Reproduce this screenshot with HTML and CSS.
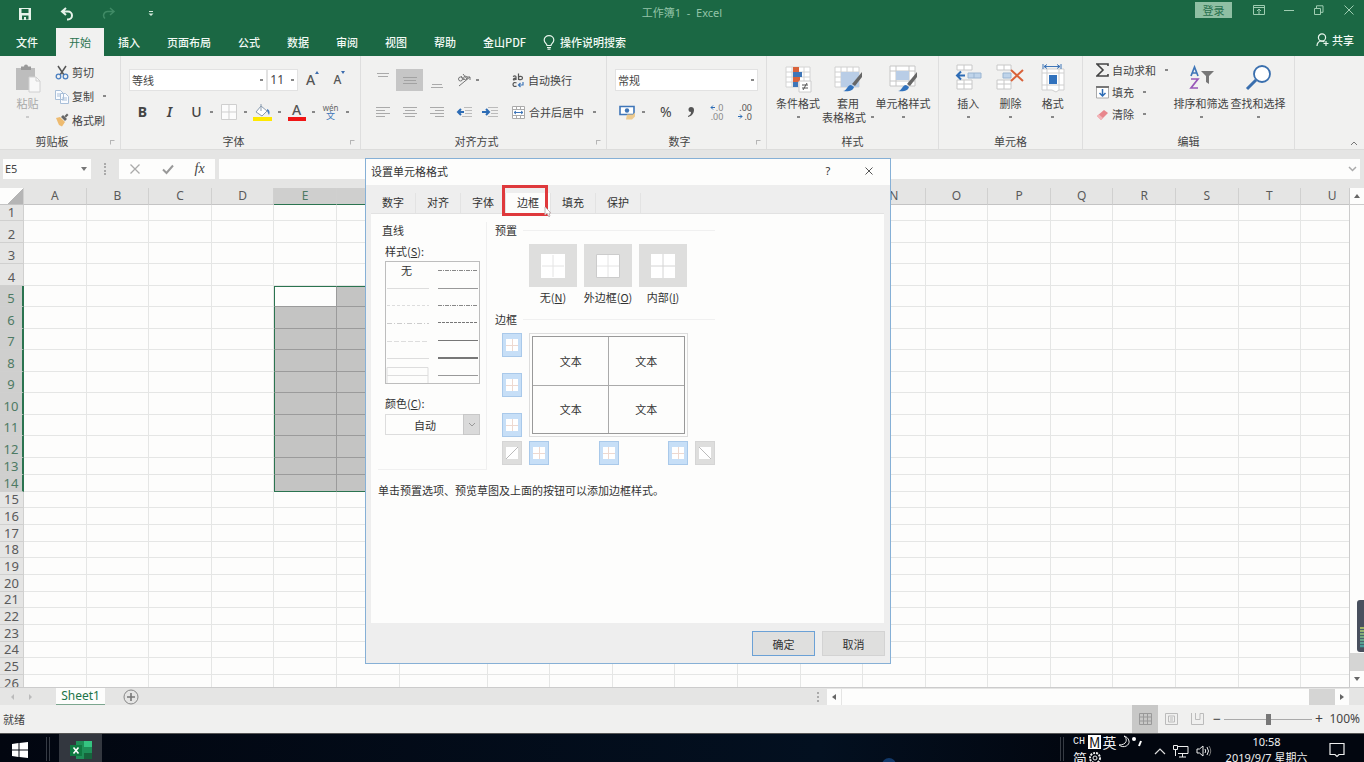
FILE: index.html
```html
<!DOCTYPE html>
<html lang="zh-CN">
<head>
<meta charset="utf-8">
<title>工作簿1 - Excel</title>
<link rel="stylesheet" href="styles.css">
</head>
<body>
<header class="titlebar">
  <div class="quick">
    <button aria-label="保存"><svg width="14" height="14" viewBox="0 0 14 14"><path fill="#e6f3ea" fill-rule="evenodd" d="M1 1h12v12H1zM3.500 2v4h7V2zM4 8.500v4h2v-2.500h2v2.500h2.500v-4z"/></svg></button>
    <button aria-label="撤消"><svg width="14" height="14" viewBox="0 0 14 14"><path d="M6 1 2 4.500 6 8M2.500 4.500H8a4 4 0 0 1 0 8H7" fill="none" stroke="#e6f3ea" stroke-width="2"/></svg></button>
    <button aria-label="恢复"><svg width="14" height="14" viewBox="0 0 14 14"><path d="M8 1l4 3.500L8 8M11.500 4.500H6a4 4 0 0 0-3 7" fill="none" stroke="#3f8a65" stroke-width="1.500"/></svg></button>
    <button aria-label="自定义快速访问工具栏"><svg width="8" height="8" viewBox="0 0 8 8"><path d="M2 1.500h4" stroke="#d5eadd"/><path d="M1.500 3.500h5L4 6z" fill="#d5eadd"/></svg></button>
  </div>
  <h1 class="doc-title">工作簿1&nbsp; -&nbsp; Excel</h1>
  <div class="window-tools">
    <button class="login">登录</button>
    <button aria-label="功能区显示选项"><svg width="12" height="10" viewBox="0 0 12 10" fill="none" stroke="#9fcdb2"><path d="M.5.5h11v9H.5zM.5 2.500h11M6 9V4M4 6l2-2 2 2"/></svg></button>
    <button aria-label="最小化"><svg width="12" height="10" viewBox="0 0 12 10"><path d="M1 5.500h10" stroke="#9fcdb2"/></svg></button>
    <button aria-label="还原"><svg width="12" height="10" viewBox="0 0 12 10" fill="none" stroke="#9fcdb2"><path d="M1.500 3.500h6v6h-6zM3.500 3V.8h6.500v6.500H8"/></svg></button>
    <button aria-label="关闭"><svg width="12" height="10" viewBox="0 0 12 10"><path d="m1.500.5 9 9m0-9-9 9" stroke="#9fcdb2"/></svg></button>
  </div>
</header>
<nav class="tabs">
  <button class="file">文件</button><button class="active">开始</button><button>插入</button><button>页面布局</button><button>公式</button><button>数据</button><button>审阅</button><button>视图</button><button>帮助</button><button>金山PDF</button>
  <button class="tell"><svg width="12" height="15" viewBox="0 0 12 15" fill="none" stroke="#e8f5ec" stroke-width="1.200"><path d="M4 10.500C4 8.500 1.200 8 1.200 5a4.800 4.400 0 0 1 9.600 0c0 3-2.800 3.500-2.800 5.500zM4 12.500h4M4.500 14.200h3"/></svg>操作说明搜索</button>
  <button class="share"><svg width="13" height="14" viewBox="0 0 13 14" fill="none" stroke="#e8f5ec" stroke-width="1.200"><circle cx="6" cy="4.500" r="3.600"/><path d="M1 13c0-3 2-5 4-5s2.500.5 3.500 1M10 8v5M7.500 10.500h5"/></svg>共享</button>
</nav>

<section class="ribbon" aria-label="开始">
  <div class="group g-clip">
    <div class="body">
      <button class="big paste"><svg width="28" height="30" viewBox="0 0 28 30"><path d="M2 4h19v22H2z" fill="#bdbdbd"/><path d="M7 2.500h3a2 2 0 0 1 4 0h3V6H7z" fill="#999"/><path d="M15 13h7l4 4v11H15z" fill="#f8f8f8" stroke="#d0d0d0"/><path d="M22 13v4h4" fill="none" stroke="#d0d0d0"/></svg><span>粘贴</span><i class="caret pale"></i></button>
      <div class="stack">
        <button><svg width="14" height="15" viewBox="0 0 14 15" fill="none"><path d="m3 1 6 9m2-9-6 9" stroke="#555" stroke-width="1.500"/><circle cx="3.500" cy="11.500" r="2.300" stroke="#4a7fc0" stroke-width="1.300"/><circle cx="10.500" cy="11.500" r="2.300" stroke="#4a7fc0" stroke-width="1.300"/></svg>剪切</button>
        <button><svg width="14" height="15" viewBox="0 0 14 15" fill="#fafcff" stroke="#a9bfd8"><path d="M.5 1.500h5l3 3v6h-8zM5.500 4.500h5l3 3v7h-8zM7 9h5M7 11h5M2 5h3M2 7h3"/></svg>复制<i class="caret"></i></button>
        <button><svg width="14" height="14" viewBox="0 0 14 14"><path d="m1 5 4-1 5 5-3 4.500L4 12z" fill="#eebb70"/><path d="m6 4 2-2 4 4-2 2zM9.500 3 12 .5l1.500 1.500L11 4.500z" fill="#666"/></svg>格式刷</button>
      </div>
    </div>
    <footer>剪贴板<i class="launch"></i></footer>
  </div>
  <div class="group g-font">
    <div class="body col">
      <div class="row">
        <label class="combo font-name"><input value="等线" aria-label="字体"><i class="caret"></i></label><label class="combo font-size"><input value="11" aria-label="字号"><i class="caret"></i></label>
        <button class="grow" aria-label="增大字号"><b class="letter big-a">A</b><svg width="4" height="3" viewBox="0 0 4 3"><path d="m0 3 2-3 2 3z" fill="#3c6cae"/></svg></button>
        <button class="grow" aria-label="减小字号"><b class="letter">A</b><svg width="4" height="3" viewBox="0 0 4 3"><path d="m0 0 2 3 2-3z" fill="#3c6cae"/></svg></button>
      </div>
      <div class="row marks">
        <button class="bold">B</button><button class="italic">I</button><button class="under">U</button><i class="caret"></i>
        <button aria-label="边框"><svg width="16" height="16" viewBox="0 0 16 16" fill="#fcfcfc" stroke="#cfcfcf"><path d="M.5.5h15v15H.5zM8 .5v15M.5 8h15"/></svg></button><i class="caret"></i>
        <button aria-label="填充颜色"><svg width="19" height="17" viewBox="0 0 19 17"><path d="m8 2 6 5-5 5-6-4z" fill="#fff" stroke="#8b9cb0"/><path d="M8 7V0" stroke="#8b9cb0"/><path d="M14 5c3 1 3 4 2 6-1-1-1-3-2-4z" fill="#4a7fc0"/><path d="M0 13h19v4H0z" fill="#ffe800"/></svg></button><i class="caret"></i>
        <button aria-label="字体颜色" class="color-a"><b class="letter">A</b></button><i class="caret"></i>
        <button class="phon"><small>wén</small><span>文</span></button><i class="caret"></i>
      </div>
    </div>
    <footer>字体<i class="launch"></i></footer>
  </div>
  <div class="group g-align">
    <div class="body align-grid">
      <button aria-label="顶端对齐"><svg width="12" height="16" viewBox="0 0 12 16" stroke="#aaa"><path d="M0 1.500h12M1 4.500h10"/></svg></button>
      <button class="on" aria-label="垂直居中"><svg width="14" height="16" viewBox="0 0 14 16" stroke="#a2a2a2"><path d="M0 5.500h14M1 8.500h12M0 11.500h14"/></svg></button>
      <button aria-label="底端对齐"><svg width="12" height="16" viewBox="0 0 12 16" stroke="#aaa"><path d="M1 12.500h10M0 15.500h12"/></svg></button>
      <button class="angle" aria-label="方向"><svg width="15" height="14" viewBox="0 0 15 14" fill="none" stroke="#777"><path d="m2 13 11-9m-3 0h3v3"/><circle cx="3.500" cy="6" r="2"/><path d="m4 3 3 4M6 1l4 5"/><circle cx="8.500" cy="5" r="1.800"/></svg><i class="caret"></i></button>
      <button class="wide"><svg width="12" height="15" viewBox="0 0 12 15" fill="none" stroke="#555" stroke-width="1.200"><path d="M1 3.500c2-1 3-.5 3 .5v3M4 5C1 5 1 7 2 7s2-.5 2-1.500M6.500.5V7M6.500 4c1-1 4-1 4 1s-3 2-4 1M4.500 10C3 9 1 9.500 1 11.500s2 2.500 3.500 1.500"/><path d="M11 9v3H6.500m2-2-2 2 2 2" stroke="#3f76b8"/></svg>自动换行</button>
      <button aria-label="左对齐"><svg width="14" height="12" viewBox="0 0 14 12" stroke="#aaa"><path d="M0 1.500h14M0 4.500h9M0 7.500h14M0 10.500h9"/></svg></button>
      <button aria-label="居中"><svg width="14" height="12" viewBox="0 0 14 12" stroke="#aaa"><path d="M0 1.500h14M2 4.500h10M0 7.500h14M2 10.500h10"/></svg></button>
      <button aria-label="右对齐"><svg width="14" height="12" viewBox="0 0 14 12" stroke="#aaa"><path d="M0 1.500h14M5 4.500h9M0 7.500h14M5 10.500h9"/></svg></button>
      <div class="indents"><button aria-label="减少缩进量"><svg width="16" height="12" viewBox="0 0 16 12"><path d="M8 1.500h8M9 4.500h7M9 7.500h7M6 10.500h10" stroke="#bbb"/><path d="M8 6H2m3-3L2 6l3 3" fill="none" stroke="#2d6cb5" stroke-width="2"/></svg></button><button aria-label="增加缩进量"><svg width="16" height="12" viewBox="0 0 16 12"><path d="M6 1.500h10M9 4.500h7M9 7.500h7M6 10.500h10" stroke="#bbb"/><path d="M0 6h6M4 3l3 3-3 3" fill="none" stroke="#2d6cb5" stroke-width="2"/></svg></button></div>
      <button class="wide"><svg width="13" height="13" viewBox="0 0 13 13" fill="#fff" stroke="#aaa"><path d="M.5.5h12v12H.5zM4.500.5v3M8.500.5v3M.5 3.500h12M.5 9.500h12M4.500 9.500v3M8.500 9.500v3"/><path d="M2 6.500h9M4 5 2 6.500 4 8m5-3 2 1.500L9 8" stroke="#3f76b8" fill="none"/></svg>合并后居中<i class="caret"></i></button>
    </div>
    <footer>对齐方式<i class="launch"></i></footer>
  </div>
  <div class="group g-num">
    <div class="body col">
      <div class="row"><label class="combo format"><input value="常规" aria-label="数字格式"><i class="caret"></i></label></div>
      <div class="row spread">
        <button aria-label="会计数字格式"><svg width="17" height="15" viewBox="0 0 17 15"><path d="M1 1.500h14v8H1z" fill="#fff" stroke="#3f76b8" stroke-width="1.600"/><circle cx="8" cy="5.500" r="2.200" fill="#3f76b8"/><path d="M8 9.500h6l2-2v4l-3 3H7z" fill="#edca8e"/></svg><i class="caret"></i></button>
        <button class="pct">%</button>
        <button aria-label="千位分隔样式"><svg width="8" height="12" viewBox="0 0 8 12"><path d="M4 1a2.500 2.500 0 1 0 0 5c0 2-1 3-3 4v1c4-1 6-4 6-7a3 3 0 0 0-3-3z" fill="#555"/></svg></button>
        <button class="dec"><span><svg width="5" height="5" viewBox="0 0 5 5"><path d="M5 2.500H1m2-2-2 2 2 2" stroke="#2d6cb5" fill="none"/></svg>.0</span><span>.00</span></button>
        <button class="dec dark"><span>.00</span><span><svg width="5" height="5" viewBox="0 0 5 5"><path d="M0 2.500h4m-2-2 2 2-2 2" stroke="#2d6cb5" fill="none"/></svg>.0</span></button>
      </div>
    </div>
    <footer>数字<i class="launch"></i></footer>
  </div>
  <div class="group g-style">
    <div class="body">
      <button class="big"><svg width="28" height="30" viewBox="0 0 28 30"><path d="M2 3h24v20H2zM8 3v20M14 3v20M20 3v20M2 8h24M2 13h24M2 18h24" fill="#fff" stroke="#d4d4d4"/><path d="M9 3h6v5H9zM9 13h7v5H9z" fill="#d9623a"/><path d="M9 8h9v5H9zM9 18h5v5H9z" fill="#3f76b8"/><path d="M15 17h12v11H15z" fill="#fff" stroke="#ccc"/><path d="M18 21h6M18 24h6M23 19l-4 7" stroke="#555"/></svg><span>条件格式</span><i class="caret"></i></button>
      <button class="big"><svg width="28" height="30" viewBox="0 0 28 30"><path d="M1 3h24v20H1zM7 3v20M13 3v20M19 3v20M1 8h24M1 13h24M1 18h24" fill="#fff" stroke="#d0d0d0"/><path d="M7 8h18v15H7z" fill="#b9cde6"/><path d="M28 8 18 20l3 2 7-9z" fill="#666"/><path d="M9 27c4 0 4-6 8-6l3 2c-1 4-6 5-11 4z" fill="#3172bd"/></svg><span>套用</span><span class="two">表格格式<i class="caret"></i></span></button>
      <button class="big"><svg width="28" height="30" viewBox="0 0 28 30"><path d="M1 2h25v20H1zM7 2v20M20 2v20M1 7h25M1 17h25" fill="#fff" stroke="#c6c6c6"/><path d="M7 7h13v9H7z" fill="#b9cde6"/><path d="M28 8 18 20l3 2 7-9z" fill="#666"/><path d="M9 27c4 0 4-6 8-6l3 2c-1 4-6 5-11 4z" fill="#3172bd"/></svg><span>单元格样式</span><i class="caret"></i></button>
    </div>
    <footer>样式</footer>
  </div>
  <div class="group g-cells">
    <div class="body">
      <button class="big"><svg width="28" height="30" viewBox="0 0 28 30"><path d="M3 1h15v5H3zM10 1v5M3 16h15v9H3zM10 16v9M3 20h15" fill="#fff" stroke="#c8c8c8"/><path d="M14 9h13v5H14zM20 9v5" fill="#bfd4ea" stroke="#9ab5d2"/><path d="M11 11.500H3m4-4-4 4 4 4" fill="none" stroke="#2d6cb5" stroke-width="2"/></svg><span>插入</span><i class="caret"></i></button>
      <button class="big"><svg width="28" height="30" viewBox="0 0 28 30"><path d="M1 1h14v5H1zM8 1v5M1 16h14v9H1zM8 16v9M1 20h14" fill="#fff" stroke="#c8c8c8"/><path d="M7 9h8v5H7z" fill="#bfd4ea" stroke="#9ab5d2"/><path d="m15 6 12 11m0-11L15 17" stroke="#d9623a" stroke-width="2"/></svg><span>删除</span><i class="caret"></i></button>
      <button class="big"><svg width="28" height="30" viewBox="0 0 28 30"><path d="M3 5h22v21h-5l-3 2-4-2H3zM3 9h22M3 21h22M8 5v21M20 5v21" fill="#fff" stroke="#cfcfcf"/><path d="M10 11h8v9h-8z" fill="#3172bd"/><path d="M4 0v5M22 0v5M5 2.500h16M8 .5l-3 2 3 2m10-4 3 2-3 2" fill="none" stroke="#3f76b8"/></svg><span>格式</span><i class="caret"></i></button>
    </div>
    <footer>单元格</footer>
  </div>
  <div class="group g-edit">
    <div class="body">
      <div class="stack">
        <button><svg width="13" height="14" viewBox="0 0 13 14"><path d="M12 3V1H1l6 6-6 6h11v-2" fill="none" stroke="#444" stroke-width="1.600"/></svg>自动求和<i class="caret"></i></button>
        <button><svg width="13" height="13" viewBox="0 0 13 13"><path d="M.5 1h12v11H.5z" fill="#fff" stroke="#aaa"/><path d="M0 0h13v2H0z" fill="#777"/><path d="M6.500 3v7m-3-3 3 3 3-3" fill="none" stroke="#2d6cb5" stroke-width="1.500"/></svg>填充<i class="caret"></i></button>
        <button><svg width="13" height="13" viewBox="0 0 13 13"><path d="m1 8 7-6 4 3-7 7z" fill="#e8868c"/><path d="m1 8 2-1.500L7 10l-2 2z" fill="#f3b4b8"/></svg>清除<i class="caret"></i></button>
      </div>
      <button class="big"><svg width="28" height="30" viewBox="0 0 28 30" fill="none"><path d="M4 12 7.500 3 11 12M5 9h5" stroke="#3f76b8" stroke-width="1.700"/><path d="M4 15h7l-7 9h7" stroke="#9858b8" stroke-width="1.700"/><path d="M14 7h13l-5 5v8l-3-2v-6z" fill="#777"/></svg><span>排序和筛选</span><i class="caret"></i></button>
      <button class="big"><svg width="28" height="30" viewBox="0 0 28 30" fill="none" stroke="#3a6fae"><circle cx="18" cy="10" r="8" fill="#fff" stroke-width="1.800"/><path d="M12 16 3 25" stroke-width="3"/></svg><span>查找和选择</span><i class="caret"></i></button>
    </div>
    <footer>编辑</footer>
  </div>
  <button class="collapse" aria-label="折叠功能区"><svg width="8" height="6" viewBox="0 0 8 6"><path d="m1 5 3-3 3 3" fill="none" stroke="#777"/></svg></button>
</section>

<section class="formula">
  <label class="namebox"><input value="E5" aria-label="名称框"><svg width="6" height="4" viewBox="0 0 6 4"><path d="M0 0h6L3 4z" fill="#777"/></svg></label>
  <i class="dots"></i>
  <div class="fx"><button aria-label="取消输入"><svg width="12" height="12" viewBox="0 0 12 12"><path d="m1.500 1.500 9 9m0-9-9 9" stroke="#aaa" stroke-width="1.300"/></svg></button><button aria-label="输入"><svg width="12" height="12" viewBox="0 0 12 12"><path d="m1 6.500 3.500 3.500L11 2.500" fill="none" stroke="#999" stroke-width="2"/></svg></button><button class="fn">fx</button></div>
  <label class="entry"><input aria-label="编辑栏"><svg width="9" height="6" viewBox="0 0 9 6"><path d="m1 1 3.500 3.500L8 1" fill="none" stroke="#aaa" stroke-width="1.500"/></svg></label>
</section>

<main class="workspace">
  <div class="sheet"><table id="cells"></table></div>
  <div class="vscroll"><button aria-label="向上滚动"><svg width="6" height="4" viewBox="0 0 6 4"><path d="M0 4h6L3 0z" fill="#666"/></svg></button><div class="track"></div><button aria-label="向下滚动"><svg width="6" height="4" viewBox="0 0 6 4"><path d="M0 0h6L3 4z" fill="#666"/></svg></button></div>
  <div class="meter"><i></i></div>

  <section class="dialog" role="dialog" aria-label="设置单元格格式">
    <header><h2>设置单元格格式</h2><button class="help">?</button><button aria-label="关闭"><svg width="8" height="8" viewBox="0 0 8 8"><path d="m.5.500 7 7m0-7-7 7" stroke="#555"/></svg></button></header>
    <nav><button>数字</button><button>对齐</button><button>字体</button><button class="current">边框<svg class="pointer" width="8" height="12" viewBox="0 0 8 12"><path d="M1 1v8l2-2 2 4 1-1-1-3h2z" fill="#fff" stroke="#c4b4b4"/></svg></button><button>填充</button><button>保护</button></nav>
    <div class="panel">
      <div class="columns">
        <fieldset class="lines">
          <legend>直线</legend>
          <span class="caption">样式(<u>S</u>):</span>
          <div class="styles"><span>无</span>
            <svg width="93" height="121" viewBox="0 0 93 121" fill="none"><path d="M1 26.500h42M1 96.500h42" stroke="#ddd"/><path d="M1 43.500h42" stroke="#ddd" stroke-dasharray="3 2"/><path d="M1 61.500h42" stroke="#ccc" stroke-dasharray="5 2 1 2"/><path d="M1 79.500h42" stroke="#ddd" stroke-dasharray="5 2"/><path d="M1 105.500h41v16H1zM1 113.500h41" stroke="#ddd"/><path d="M52 8.500h40M52 43.500h40" stroke="#888" stroke-dasharray="4 1 1 1"/><path d="M52 26.500h40M52 113.500h40" stroke="#999"/><path d="M52 60.500h40" stroke="#777" stroke-dasharray="3 1"/><path d="M52 78.500h40" stroke="#777"/><path d="M52 96h40" stroke="#777" stroke-width="2"/></svg>
          </div>
          <label class="caption" for="line-color">颜色(<u>C</u>):</label>
          <div class="color"><select id="line-color"><option>自动</option></select><i><svg width="8" height="6" viewBox="0 0 8 6"><path d="m1 1 3 3 3-3" fill="none" stroke="#999"/></svg></i></div>
        </fieldset>
        <div class="right">
          <fieldset><legend class="ruled">预置</legend>
            <div class="presets">
              <button><i class="tile"><svg width="24" height="24" viewBox="0 0 24 24"><path d="M0 0h24v24H0z" fill="#fff"/><path d="M12 1v22M1 12h22" stroke="#e4e4e4"/></svg></i><span>无(<u>N</u>)</span></button>
              <button><i class="tile"><svg width="24" height="24" viewBox="0 0 24 24"><path d="M.5.5h23v23H.5z" fill="#fff" stroke="#ccc"/><path d="M12 1v22M1 12h22" stroke="#e4e4e4"/></svg></i><span>外边框(<u>O</u>)</span></button>
              <button><i class="tile"><svg width="24" height="24" viewBox="0 0 24 24"><path d="M0 0h24v24H0z" fill="#fff"/><path d="M12 0v24M0 12h24" stroke="#d4d4d4"/></svg></i><span>内部(<u>I</u>)</span></button>
            </div>
          </fieldset>
          <fieldset><legend class="ruled">边框</legend>
            <div class="border-grid">
              <div class="side">
                <button class="edge" aria-label="上边框"></button><button class="edge" aria-label="水平内边框"></button><button class="edge" aria-label="下边框"></button>
              </div>
              <div class="preview"><div><span>文本</span><span>文本</span><span>文本</span><span>文本</span></div></div>
              <button class="edge off diag-up" aria-label="斜上线"><svg width="14" height="14" viewBox="0 0 14 14"><path d="M1 1h12v12H1z" fill="#fff"/><path d="M1 13 13 1" stroke="#bbb"/></svg></button>
              <div class="across"><button class="edge" aria-label="左边框"></button><button class="edge" aria-label="垂直内边框"></button><button class="edge" aria-label="右边框"></button></div>
              <button class="edge off" aria-label="斜下线"><svg width="14" height="14" viewBox="0 0 14 14"><path d="M1 1h12v12H1z" fill="#fff"/><path d="m1 1 12 12" stroke="#bbb"/></svg></button>
            </div>
          </fieldset>
        </div>
      </div>
      <p>单击预置选项、预览草图及上面的按钮可以添加边框样式。</p>
    </div>
    <footer><button class="ok">确定</button><button>取消</button></footer>
  </section>
</main>

<div class="sheetbar">
  <div class="arrows"><svg width="5" height="6" viewBox="0 0 5 6"><path d="M4 0v6L1 3z" fill="#bbb"/></svg><svg width="5" height="6" viewBox="0 0 5 6"><path d="M1 0v6l3-3z" fill="#bbb"/></svg></div>
  <button class="sheet-tab">Sheet1</button>
  <button class="add" aria-label="新工作表"><svg width="16" height="16" viewBox="0 0 16 16" fill="none"><circle cx="8" cy="8" r="7" stroke="#888"/><path d="M8 4v8M4 8h8" stroke="#777" stroke-width="1.600"/></svg></button>
  <div class="hscroll"><i class="dots"></i><button aria-label="向左滚动"><svg width="4" height="6" viewBox="0 0 4 6"><path d="M4 0v6L0 3z" fill="#666"/></svg></button><div class="track"></div><button aria-label="向右滚动"><svg width="4" height="6" viewBox="0 0 4 6"><path d="M0 0v6l4-3z" fill="#666"/></svg></button></div>
</div>
<div class="status">
  <span class="ready">就绪</span>
  <button class="view on" aria-label="普通"><svg width="13" height="12" viewBox="0 0 13 12" fill="none" stroke="#999"><path d="M.5.5h12v11H.5zM4.500.5v11M8.500.5v11M.5 4h12M.5 8h12"/></svg></button>
  <button class="view" aria-label="页面布局"><svg width="13" height="12" viewBox="0 0 13 12" fill="none" stroke="#bbb"><path d="M.5.5h12v11H.5zM3.500 3h6v6h-6zM5 5h3M5 7h3"/></svg></button>
  <button class="view" aria-label="分页预览"><svg width="13" height="12" viewBox="0 0 13 12" fill="none" stroke="#bbb"><path d="M.5 0v11.500h12V.5H9v6H4.500V0"/></svg></button>
  <button class="zoom-step">−</button><input class="zoom" type="range" min="0" max="100" value="50" aria-label="显示比例"><button class="zoom-step">+</button><span class="percent">100%</span>
</div>
<footer class="taskbar">
  <button class="start" aria-label="开始菜单"><svg width="16" height="16" viewBox="0 0 16 16" fill="#fff"><path d="m0 2 6.500-1v6.500H0zM7.500 1 16 0v7.500H7.500zM0 8.500h6.500V15L0 14zM7.500 8.500H16V16l-8.500-1z"/></svg></button>
  <i class="rule"></i>
  <button class="excel" aria-label="Excel"><svg width="22" height="20" viewBox="0 0 22 20"><path d="M6 1h16v18H6z" fill="#1e9058"/><path d="M14 1h8v6h-8z" fill="#35c481"/><path d="M14 13h8v6h-8z" fill="#16643c"/><path d="M0 5h12v11H0z" fill="#0f7a41"/><path d="m3.500 7.500 5 6m0-6-5 6" stroke="#fff" stroke-width="1.600"/></svg></button>
  <i class="glow"></i>
  <i class="rule"></i>
  <div class="ime"><div><small>CH</small><b>M</b>英<svg width="13" height="14" viewBox="0 0 13 14"><path d="M7 1c4 3 3 9-5 9 5 4 11 0 10-4-.5-3-3-4.500-5-5z" fill="none" stroke="#eee"/></svg><svg width="12" height="14" viewBox="0 0 12 14"><circle cx="3" cy="4" r="2" fill="#fff"/><path d="M10 6 8 11" stroke="#fff" stroke-width="2"/></svg></div><div>简<svg width="14" height="14" viewBox="0 0 14 14" fill="none" stroke="#eee"><circle cx="7" cy="7" r="5" stroke-width="2" stroke-dasharray="2 1"/><circle cx="7" cy="7" r="2"/></svg></div></div>
  <div class="tray"><svg width="12" height="8" viewBox="0 0 12 8"><path d="m1 7 5-5 5 5" fill="none" stroke="#ddd" stroke-width="1.200"/></svg><svg width="16" height="14" viewBox="0 0 16 14" fill="none" stroke="#eee"><path d="M5 2.500h10v7H5M9.500 10v3M6 13h7M.5 1.500h4v4h-4zM2.500 6v6"/></svg><svg width="16" height="14" viewBox="0 0 16 14" fill="none" stroke="#eee"><path d="M1 5h2.500L7 2v10L3.500 9H1zM9 5q1.500 2 0 4M11 3q3 4 0 8"/><path d="M13 2q3.500 5 0 10" stroke="#777"/></svg></div>
  <div class="clock"><span>10:58</span><span>2019/9/7 星期六</span></div>
  <button class="notice" aria-label="通知"><svg width="16" height="16" viewBox="0 0 16 16"><path d="M1 1.500h14v11h-5l-2 2-2-2H1z" fill="none" stroke="#eee" stroke-width="1.200"/></svg></button>
</footer>
<script src="script.js"></script>
</body>
</html>
```

FILE: styles.css
```css
* { box-sizing: border-box; }
body {
  margin: 0; height: 100vh; overflow: hidden; display: flex; flex-direction: column;
  font: 11px/16px "Noto Sans CJK SC", sans-serif; color: #444; background: #e5e5e4;
}
button, input, select { font: inherit; color: inherit; border: 0; background: none; padding: 0; margin: 0; border-radius: 0; }
button { display: flex; align-items: center; justify-content: center; white-space: nowrap; }
svg { display: block; flex: none; }
i { font-style: normal; }
h1, h2, p { margin: 0; font-size: inherit; font-weight: 400; }

.titlebar { flex: none; height: 28px; background: #1b6844; display: grid; grid-template-columns: 1fr auto 1fr; align-items: center; }
.quick { display: flex; padding-left: 4px; }
.quick button { width: 42px; height: 26px; }
.doc-title { color: #93c4a8; font-family: "Noto Sans", "Noto Sans CJK SC", sans-serif; line-height: 14px; padding-bottom: 2px; }
.window-tools { display: flex; justify-content: flex-end; align-items: center; height: 20px; align-self: start; }
.window-tools button { width: 30px; height: 16px; }
.window-tools .login { width: 37px; margin-right: 12px; background: #8fbfa3; color: #28704d; }

.tabs { flex: none; height: 28px; background: #1b6844; display: flex; gap: 1px; color: #f2faf5; font-weight: 500; }
.tabs button { padding: 0 13px; }
.tabs .file { padding: 0 17px 0 16px; }
.tabs .active { background: #f1f1f0; color: #2b7450; font-weight: 400; }
.tabs .tell { gap: 5px; padding-left: 3px; }
.tabs .share { margin-left: auto; padding: 0 10px 4px 0; gap: 3px; }

.ribbon { flex: none; height: 94px; background: #f1f1f0; border-bottom: 1px solid #dcdcdb; display: flex; }
.group { flex: none; display: flex; flex-direction: column; border-right: 1px solid #dedede; }
.body { flex: 1; display: flex; }
.group footer { flex: none; height: 16px; text-align: center; position: relative; line-height: 16px; }
.launch { position: absolute; right: 5px; bottom: 4px; width: 5px; height: 5px; border: 1px solid #b5b5b5; border-right-color: transparent; border-bottom-color: transparent; }
.caret { width: 3px; height: 2px; background: #888; flex: none; }
.pale { background: #ccc; }
.g-clip { width: 121px; } .g-clip footer { padding-right: 16px; }
.g-font { width: 240px; } .g-font footer { padding-right: 14px; }
.g-align { width: 246px; } .g-align footer { padding-right: 14px; }
.g-num { width: 160px; } .g-num footer { padding-right: 14px; }
.g-style { width: 172px; } .g-cells { width: 144px; } .g-edit { width: 212px; }
.big { flex-direction: column; justify-content: flex-start; padding-top: 8px; }
.big > span { line-height: 14px; }
.big > .caret { margin-top: 6px; }
.big svg { margin-bottom: 2px; }
.two { display: flex; align-items: center; gap: 5px; }
.paste { width: 55px; color: #a8a8a8; }
.stack { display: flex; flex-direction: column; gap: 4px; padding-top: 6px; }
.stack button { height: 20px; justify-content: flex-start; gap: 3px; }
.stack .caret { margin-left: 6px; }
.body.col { flex-direction: column; gap: 10px; padding: 13px 8px 0; }
.row { display: flex; align-items: center; height: 22px; }
.combo { display: flex; align-items: center; background: #fff; border: 1px solid #e2e2e2; height: 22px; padding-right: 3px; }
.combo input { flex: 1; min-width: 0; padding-left: 2px; }
.font-name { width: 139px; } .font-size { width: 31px; }
.font-size input { font-family: "Noto Sans", sans-serif; font-size: 12px; }
.format { flex: 1; }
.grow { width: 27px; align-items: flex-start; padding-left: 2px; }
.letter { font: 500 14px/18px "Noto Sans", sans-serif; color: #555; }
.grow .letter { font-size: 12px; } .grow .big-a { font-size: 14px; }
.marks { font-family: "Noto Sans", sans-serif; font-size: 14px; }
.marks button { width: 31px; }
.marks .bold, .marks .italic, .marks .under { width: 27px; }
.bold { font-weight: 700; } .italic { font-style: italic; font-weight: 600; } .under { font-weight: 500; }
.color-a { height: 18px; align-items: flex-start; background: linear-gradient(#f01515, #f01515) 50% 100% / 18px 4px no-repeat; }
.color-a .letter { line-height: 14px; }
.marks .phon { flex-direction: column; font: 9px/9px "Noto Sans CJK SC", sans-serif; color: #3f76b8; }
.phon small { font: 8px/7px "Noto Sans", sans-serif; color: #666; }
.align-grid { display: grid; grid-template-columns: 27px 27px 27px 52px 1fr; grid-template-rows: 22px 22px; row-gap: 10px; padding: 13px 0 0 8px; }
.align-grid .on { background: #c6c6c6; }
.align-grid .wide { justify-content: flex-start; gap: 4px; padding-left: 10px; }
.wide .caret { margin-left: 5px; }
.angle { gap: 4px; justify-content: flex-start; padding-left: 7px; }
.indents { display: flex; justify-content: space-between; padding: 0 4px 0 6px; }
.spread { justify-content: space-between; padding: 0 6px 0 4px; }
.spread button { gap: 6px; }
.pct { font: 14px/16px "Noto Sans", sans-serif; }
.dec { flex-direction: column; font: 9px/9px "Noto Sans", sans-serif; color: #888; }
.spread .dec { gap: 0; align-items: flex-end; }
.dec span { display: flex; align-items: center; gap: 1px; }
.spread .dark { color: #555; }
.g-style .body { padding-left: 6px; display: grid; grid-template-columns: 50px 50px 60px; }
.g-cells .body { padding: 0 8px; display: grid; grid-template-columns: repeat(3, 1fr); }
.g-edit .body { padding-left: 13px; display: grid; grid-template-columns: 76px 58px 56px; }
.g-edit .stack { gap: 2px; padding-top: 4px; }
.collapse { margin: auto 6px 3px auto; }

.formula { flex: none; height: 38px; display: flex; align-items: flex-start; padding: 9px 4px 0 3px; }
.namebox, .fx, .entry { display: flex; align-items: center; height: 20px; background: #fdfdfc; }
.namebox { width: 88px; padding-right: 4px; }
.namebox input { flex: 1; min-width: 0; padding-left: 2px; font-family: "Noto Sans", sans-serif; }
.dots { width: 0; height: 12px; border-left: 2px dotted #aaa; margin: 4px 13px; }
.fx { width: 96px; margin-right: 4px; justify-content: space-around; }
.fn { font: italic 14px/18px "Liberation Serif", serif; }
.entry { flex: 1; padding-right: 3px; }
.entry input { flex: 1; }

.workspace { flex: 1; min-height: 0; display: flex; position: relative; }
.sheet { flex: 1; min-width: 0; overflow: hidden; background: #fdfdfc; border-right: 1px solid #ccc; }
#cells { table-layout: fixed; width: 100vw; border-collapse: separate; border-spacing: 0; font: 13px/15px "Noto Sans", sans-serif; }
#cells col { width: 4.59%; }
#cells .head-col { width: 1.76%; }
#cells .wide-col { width: 6.45%; }
#cells th { font-weight: 400; padding: 0; background: #e5e5e4; color: #5a5a5a; }
#cells thead th { height: 17px; border-right: 1px solid #d0d0cf; border-bottom: 1px solid #c4c4c4; font-size: 12px; line-height: 16px; }
#cells thead .picked { background: #cfcfce; border-bottom-color: #2b7450; color: #4d7a63; }
#cells thead .corner { background: linear-gradient(135deg, transparent 60%, #b5b5b5 60%); }
#cells td { padding: 0; border-right: 1px solid #e5e6e5; border-bottom: 1px solid #e5e6e5; }
#cells tbody th { border-bottom: 1px solid #d0d0cf; border-right: 1px solid #d0d0cf; vertical-align: bottom; }
#cells tbody .picked { background: #cfcfce; color: #4d7a63; border-right: 2px solid #2b7450; }
#cells td.inside { background: #c4c4c3; border-color: #9b9b9b; }
#cells td.active-cell { background: #fdfdfc; }
#cells td.left { border-left: 1px solid #2b7450; }
#cells tr.first-pick .inside { border-top: 1px solid #2b7450; }
#cells tr.last-pick .inside { border-bottom-color: #2b7450; }
.tall-a { height: 21px; } .tall-b { height: 22px; } .short { height: 17px; } .tight { height: 16px; }

.vscroll { flex: none; width: 14px; display: flex; flex-direction: column; }
.vscroll button { height: 16px; background: #fdfdfc; }
.track { flex: 1; background: #fdfdfc; border-top: 1px solid #ccc; border-bottom: 18px solid #d5d5d4; }
.meter { position: absolute; right: 0; bottom: 35px; width: 7px; height: 52px; background: #49505e; border-radius: 3px 0 0 3px; padding: 27px 0 4px 3px; }
.meter i { display: block; height: 100%; background: repeating-linear-gradient(transparent 0 2px, #48656c 2px 3px), linear-gradient(#a7b765, #3f9aa0); }

.dialog { position: absolute; left: calc(50% - 317px); top: -30px; width: 526px; background: #eee; border: 1px solid #86b0d6; color: #333; display: flex; flex-direction: column; }
.dialog header { height: 26px; background: #fdfdfc; display: flex; align-items: center; padding: 0 17px 2px 5px; }
.dialog h2 { flex: 1; }
.dialog header button { width: 8px; margin-left: 33px; }
.help { font: 11px/16px "Noto Sans", sans-serif; }
.dialog nav { display: flex; padding: 8px 5px 0; height: 28px; }
.dialog nav button { width: 45px; height: 20px; padding-bottom: 2px; border-right: 1px solid #e3e3e3; position: relative; }
.dialog nav .current { background: #fdfdfc; }
.current::after { content: ""; box-sizing: border-box; position: absolute; left: -4px; top: -8px; width: 46px; height: 31px; border: 3px solid #df393c; }
.pointer { position: absolute; right: -2px; bottom: -5px; z-index: 2; }
.panel { height: 410px; background: #fdfdfc; border-top: 1px solid #e2e2e2; margin: 0 6px 0 5px; padding: 8px 7px; }
.columns { display: flex; gap: 8px; }
fieldset { border: 0; margin: 0; padding: 0; min-width: 0; }
legend { padding: 0; float: left; width: 100%; line-height: 16px; }
legend + * { clear: both; }
.ruled { background: linear-gradient(#f0f0f0, #f0f0f0) 100% 50% / calc(100% - 28px) 1px no-repeat; }
.lines { width: 109px; height: 248px; border: 1px solid #f0f0f0; border-width: 0 1px 1px 0; padding-left: 7px; }
.lines legend { margin: 0 0 5px -3px; }
.caption { display: block; line-height: 16px; }
.styles { width: 95px; height: 123px; border: 1px solid #bdbdbd; position: relative; margin: 2px 0 11px; }
.styles span { position: absolute; left: 15px; top: 0; }
.color { position: relative; width: 95px; height: 21px; margin-top: 3px; }
.color select { appearance: none; width: 100%; height: 100%; border: 1px solid #ddd; text-align: center; text-align-last: center; padding-right: 15px; }
.color i { position: absolute; right: 0; top: 0; width: 17px; height: 21px; background: #dadada; border: 1px solid #c8c8c8; display: grid; place-items: center; pointer-events: none; }
.presets { display: flex; gap: 7px; padding: 6px 0 6px 34px; }
.presets button { width: 48px; flex-direction: column; }
.tile { width: 48px; height: 43px; background: #dededd; display: grid; place-items: center; }
.presets span { margin-top: 2px; }
.border-grid { display: grid; grid-template-columns: 20px 159px 20px; column-gap: 7px; row-gap: 4px; padding: 6px 0 0 7px; }
.side { display: flex; flex-direction: column; justify-content: space-between; }
.across { display: flex; justify-content: space-between; }
.edge { width: 20px; height: 24px; background: #c7dff7; border: 1px solid #a9c9ea; }
.edge:not(.off)::before { content: ""; width: 12px; height: 12px; background: linear-gradient(#eed9d0, #eed9d0) 50% 50% / 1px 100% no-repeat, linear-gradient(#eed9d0, #eed9d0) 50% 50% / 100% 1px no-repeat, #fff; }
.off { background: #dededd; border-color: #d5d5d5; }
.diag-up { grid-column: 1; }
.preview { grid-column: 2 / 4; width: 159px; height: 104px; border: 1px solid #ddd; padding: 2px; }
.preview div { display: grid; grid-template-columns: 1fr 1fr; grid-template-rows: 1fr 1fr; height: 100%; border: 1px solid #999; background: linear-gradient(#aaa, #aaa) 50% 50% / 1px 100% no-repeat, linear-gradient(#aaa, #aaa) 50% 50% / 100% 1px no-repeat; }
.preview span { display: grid; place-items: center; }
.panel p { margin-top: 12px; }
.dialog footer { display: flex; justify-content: flex-end; gap: 7px; padding: 8px 5px 7px; }
.dialog footer button { width: 63px; height: 25px; background: #dfdfde; border: 1px solid #d3d3d3; }
.dialog footer .ok { border: 1px solid #6ba1d6; }

.sheetbar { flex: none; height: 18px; display: flex; align-items: center; border-top: 1px solid #ccc; }
.arrows { width: 56px; display: flex; gap: 13px; padding-left: 10px; }
.sheet-tab { width: 49px; height: 17px; background: #fdfdfc; color: #1b7448; border-bottom: 1px solid #7ca68f; font: 12px/16px "Noto Sans", sans-serif; }
.add { margin-left: 18px; }
.hscroll { width: 39.5%; margin: 0 15px 0 auto; display: flex; height: 16px; align-items: stretch; }
.hscroll .dots { margin: 3px 8px 0 7px; height: 10px; }
.hscroll button { width: 14px; background: #fdfdfc; }
.hscroll .track { border: 0; border-right: 26px solid #d5d5d4; margin-left: 1px; }
.status { flex: none; height: 28px; background: #f0f0ef; display: flex; align-items: center; padding-right: 4px; }
.ready { margin: 0 auto 0 3px; }
.view { width: 26px; height: 28px; }
.view.on { background: #c8c8c7; }
.zoom-step { width: 14px; font: 14px/16px "Noto Sans", sans-serif; }
.zoom { appearance: none; width: 88px; height: 14px; background: linear-gradient(#aaa, #aaa) 0 50% / 100% 1px no-repeat; }
.zoom::-webkit-slider-thumb { appearance: none; width: 5px; height: 11px; background: #777; }
.percent { width: 34px; text-align: right; font: 12px/16px "Noto Sans", sans-serif; }

.taskbar { flex: none; height: 29px; overflow: hidden; background: linear-gradient(90deg, #020610, #031020 60%, #02060f 80%); color: #f0f0f0; display: flex; align-items: flex-start; border-top: 1px solid #555; }
.start { width: 40px; height: 32px; }
.rule { width: 4px; height: 24px; margin: 3px 9px 0 6px; border: 1px solid #363b44; border-width: 0 1px; }
.excel { width: 43px; height: 32px; background: #33373f; }
.glow { width: 14px; height: 8px; border-radius: 7px 7px 0 0; background: #12396a; margin: 24px auto 0 780px; }
.ime { width: 81px; font-size: 14px; line-height: 16px; }
.ime div { display: flex; align-items: center; gap: 1px; height: 16px; }
.ime small { font: 10px/14px "Liberation Mono", monospace; margin-right: 2px; }
.ime b { background: #fff; color: #111; line-height: 14px; padding: 0 1px; font-weight: 400; }
.tray { display: flex; gap: 7px; align-items: center; height: 34px; margin-right: 12px; }
.clock { width: 85px; display: flex; flex-direction: column; align-items: center; line-height: 16px; font-family: "Noto Sans", "Noto Sans CJK SC", sans-serif; white-space: nowrap; }
.notice { width: 55px; height: 32px; }
```

FILE: script.js
```js
const COLUMNS = 'ABCDEFGHIJKLMNOPQRSTU';
const table = document.getElementById('cells');

function heightClass(row) {
  if (row === 1) return 'tight';
  if (row <= 12) return row % 2 ? 'tall-a' : 'tall-b';
  return row % 3 === 0 ? 'tight' : 'short';
}

const picked = (c) => c >= 4 && c <= 8;
let html = '<colgroup><col class="head-col">';
for (let c = 0; c < COLUMNS.length; c++) html += c === 6 ? '<col class="wide-col">' : '<col>';
html += '</colgroup><thead><tr><th class="corner"></th>';
[...COLUMNS].forEach((name, c) => { html += `<th class="${picked(c) ? 'picked' : ''}">${name}</th>`; });
html += '</tr></thead><tbody>';
for (let r = 1; r <= 26; r++) {
  const inRows = r >= 5 && r <= 14;
  html += `<tr class="${heightClass(r)} ${r === 5 ? 'first-pick' : ''} ${r === 14 ? 'last-pick' : ''}"><th class="${inRows ? 'picked' : ''}">${r}</th>`;
  for (let c = 0; c < COLUMNS.length; c++) {
    const names = [];
    if (inRows && picked(c)) {
      names.push('inside');
      if (c === 4) names.push('left');
      if (c === 4 && r === 5) names.push('active-cell');
    }
    html += `<td class="${names.join(' ')}"></td>`;
  }
  html += '</tr>';
}
table.innerHTML = html + '</tbody>';
```
